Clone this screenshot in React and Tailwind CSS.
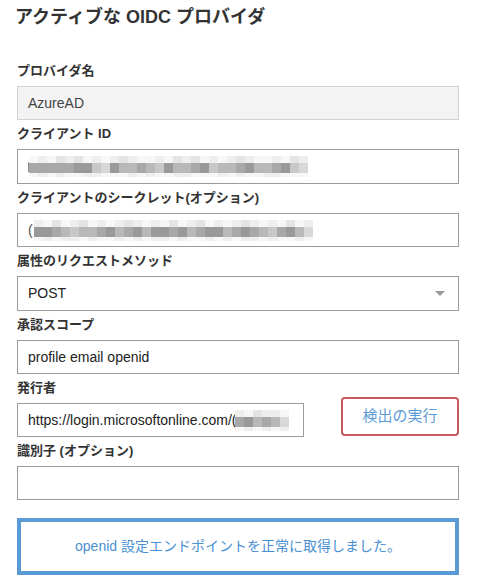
import React from "react";

const SHADE = {
  A: "bg-[#999999]",
  B: "bg-[#a8a8a8]",
  C: "bg-[#b8b8b8]",
  D: "bg-[#c8c8c8]",
  E: "bg-[#d8d8d8]",
  F: "bg-[#e6e6e6]",
};
const LIGHT = {
  0: "bg-[#f7f7f7]",
  1: "bg-[#eeeeee]",
  2: "bg-[#e4e4e4]",
};

function Blur({ mid, top, bottom }) {
  return (
    <div className="flex">
      {mid.split("").map((m, i) => (
        <div key={i} className="flex w-[9px] flex-col">
          <div className={`h-[7px] ${LIGHT[top[i % top.length]]}`} />
          <div className={`h-[10px] ${SHADE[m]}`} />
          <div className={`h-[4px] ${LIGHT[bottom[i % bottom.length]]}`} />
        </div>
      ))}
    </div>
  );
}

function Label({ children, className = "" }) {
  return (
    <div className={`h-[18px] text-[13px] font-bold leading-[18px] text-[#333333] ${className}`}>
      {children}
    </div>
  );
}

function Field({ label, children, first }) {
  return (
    <div className={first ? "" : "mt-[5px]"}>
      <Label>{label}</Label>
      <div className="mt-[6px]">{children}</div>
    </div>
  );
}

function Box({ children, className = "" }) {
  return (
    <div
      className={`flex h-[34px] items-center overflow-hidden border border-[#9b9b9b] bg-white pl-[10px] text-[14px] text-[#222222] ${className}`}
    >
      {children}
    </div>
  );
}

export default function App() {
  return (
    <div
      className="h-[585px] w-[484px] overflow-hidden bg-white"
      style={{ fontFamily: '"Liberation Sans", "Noto Sans CJK JP", Arial, sans-serif' }}
    >
      <div className="pl-[15px] pt-[5px] text-[18px] font-bold leading-[24px] text-[#333333]">
        アクティブな OIDC プロバイダ
      </div>

      <div className="ml-[17px] mt-[33px] w-[442px]">
        <Field label="プロバイダ名" first>
          <div className="flex h-[34px] items-center border border-[#d2d2d2] bg-[#f3f3f3] pl-[10px] text-[14px] text-[#444444]">
            AzureAD
          </div>
        </Field>

        <Field label="クライアント ID">
          <Box className="h-[35px]">
            <div className="w-[1px] self-center">
              <div className="h-[10px] w-[2px] bg-[#8a8a8a]" />
            </div>
            <Blur
              mid="BBBBBAADEACCBCDACCBADCCBACCBADE"
              top="0102120101210"
              bottom="0101001100"
            />
          </Box>
        </Field>

        <Field label="クライアントのシークレット(オプション)">
          <Box>
            <span className="mr-[1px] text-[#555555]">(</span>
            <Blur
              mid="AABCDCCBACBACAABACBAACBABCDBACE"
              top="1020120101210"
              bottom="0101101001"
            />
          </Box>
        </Field>

        <Field label="属性のリクエストメソッド">
          <div className="flex h-[35px] items-center justify-between border border-[#9b9b9b] bg-white pl-[10px] pr-[13px] text-[14px] text-[#222222]">
            <span>POST</span>
            <div className="h-0 w-0 border-x-[5px] border-t-[5px] border-x-transparent border-t-[#9a9a9a]" />
          </div>
        </Field>

        <Field label="承認スコープ">
          <Box className="h-[33px]">profile email openid</Box>
        </Field>

        <div className="mt-[5px] flex items-end">
          <div className="w-[287px]">
            <Label>発行者</Label>
            <div className="mt-[6px]">
              <Box>
                <span className="whitespace-nowrap">https://login.microsoftonline.com/(</span>
                <div className="-ml-[2px]">
                  <Blur mid="BACBCE" top="1021" bottom="01" />
                </div>
              </Box>
            </div>
          </div>
          <button className="mb-[1px] ml-[37px] flex h-[39px] w-[118px] items-center justify-center rounded-[4px] border-2 border-[#c95663] bg-white text-[15px] text-[#5b9bd5]">
            検出の実行
          </button>
        </div>

        <Field label="識別子 (オプション)">
          <Box />
        </Field>

        <div className="mt-[18px] flex h-[57px] items-center justify-center border-4 border-[#5b9bd5] text-[14px] text-[#4a90d2]">
          openid 設定エンドポイントを正常に取得しました。
        </div>
      </div>
    </div>
  );
}
